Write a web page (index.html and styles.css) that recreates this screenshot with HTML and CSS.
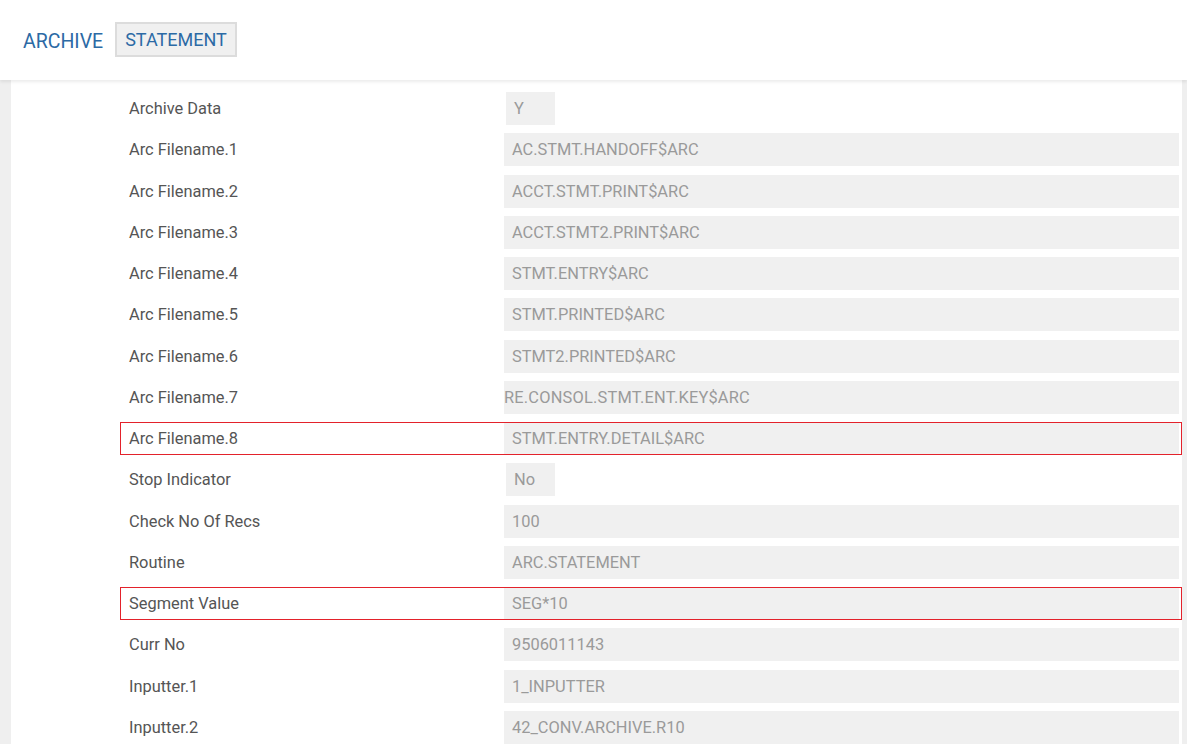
FILE: index.html
```html
<!DOCTYPE html>
<html lang="en">
<head>
    <meta charset="UTF-8">
    <title>ARCHIVE STATEMENT</title>
    <link rel="stylesheet" href="styles.css">
</head>
<body>
    <div class="header">
        <span class="app-name">ARCHIVE</span>
        <span class="record-id">STATEMENT</span>
    </div>

    <div class="content">
        <div class="field-list">
            <div class="field">
                <div class="label">Archive Data</div>
                <div class="value short">Y</div>
            </div>
            <div class="field">
                <div class="label">Arc Filename.1</div>
                <div class="value">AC.STMT.HANDOFF$ARC</div>
            </div>
            <div class="field">
                <div class="label">Arc Filename.2</div>
                <div class="value">ACCT.STMT.PRINT$ARC</div>
            </div>
            <div class="field">
                <div class="label">Arc Filename.3</div>
                <div class="value">ACCT.STMT2.PRINT$ARC</div>
            </div>
            <div class="field">
                <div class="label">Arc Filename.4</div>
                <div class="value">STMT.ENTRY$ARC</div>
            </div>
            <div class="field">
                <div class="label">Arc Filename.5</div>
                <div class="value">STMT.PRINTED$ARC</div>
            </div>
            <div class="field">
                <div class="label">Arc Filename.6</div>
                <div class="value">STMT2.PRINTED$ARC</div>
            </div>
            <div class="field">
                <div class="label">Arc Filename.7</div>
                <div class="value scrolled">RE.CONSOL.STMT.ENT.KEY$ARC</div>
            </div>
            <div class="field changed">
                <div class="label">Arc Filename.8</div>
                <div class="value">STMT.ENTRY.DETAIL$ARC</div>
            </div>
            <div class="field">
                <div class="label">Stop Indicator</div>
                <div class="value short">No</div>
            </div>
            <div class="field">
                <div class="label">Check No Of Recs</div>
                <div class="value">100</div>
            </div>
            <div class="field">
                <div class="label">Routine</div>
                <div class="value">ARC.STATEMENT</div>
            </div>
            <div class="field changed">
                <div class="label">Segment Value</div>
                <div class="value">SEG*10</div>
            </div>
            <div class="field">
                <div class="label">Curr No</div>
                <div class="value">9506011143</div>
            </div>
            <div class="field">
                <div class="label">Inputter.1</div>
                <div class="value">1_INPUTTER</div>
            </div>
            <div class="field">
                <div class="label">Inputter.2</div>
                <div class="value">42_CONV.ARCHIVE.R10</div>
            </div>
        </div>
    </div>
</body>
</html>
```

FILE: styles.css
```css
body {
    margin: 0;
    font-family: 'Roboto', 'Liberation Sans', sans-serif;
    background-color: #efefef;
    color: #555;
    height: 744px;
    overflow: hidden;
}
.header {
    position: relative;
    z-index: 1;
    height: 80px;
    background: white;
    display: flex;
    align-items: center;
    gap: 12px;
    padding-left: 23px;
    box-shadow: 0 2px 3px rgba(0,0,0,0.08);
}
.app-name {
    font-size: 19.5px;
    color: #2c6aa5;
    margin-top: 2px;
}
.record-id {
    font-size: 18px;
    color: #2c6aa5;
    background: #f0f0f0;
    border: 2px solid #dcdcdc;
    padding: 6px 8px;
    line-height: 19px;
    margin-top: -1px;
}
.content {
    background: white;
    margin-left: 11px;
    margin-right: 5px;
    padding-top: 12px;
    height: 652px;
}
.field-list {
    display: flex;
    flex-direction: column;
    gap: 8.27px;
    margin-left: 109px;
}
.field {
    display: flex;
    align-items: center;
    height: 33px;
    padding-right: 3px;
}
.field.changed {
    outline: 1px solid #e3222b;
    outline-offset: -1px;
}
.label {
    width: 375px;
    padding-left: 9px;
    font-size: 16.4px;
    color: #555;
}
.value {
    flex: 1;
    height: 33px;
    line-height: 33px;
    background: #f0f0f0;
    color: #9a9a9a;
    font-size: 16.4px;
    padding-left: 8px;
    overflow: hidden;
    white-space: nowrap;
}
.value.scrolled {
    padding-left: 0;
    letter-spacing: 0.2px;
}
.value.short {
    flex: none;
    width: 41px;
    margin-left: 2px;
}
```
